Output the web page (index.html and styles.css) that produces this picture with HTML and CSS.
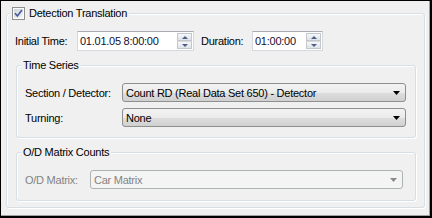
FILE: index.html
```html
<!DOCTYPE html>
<html lang="en">
<head>
    <meta charset="UTF-8">
    <title>Detection Translation</title>
    <link rel="stylesheet" href="styles.css">
</head>
<body>
    <div class="panel">
        <fieldset class="group group-main">
            <legend class="check-legend">
                <span class="checkbox">
                    <svg width="13" height="13" viewBox="0 0 13 13">
                        <defs>
                            <linearGradient id="cbFill" x1="0" y1="0" x2="1" y2="1">
                                <stop offset="0" stop-color="#cfd5dd"/>
                                <stop offset="1" stop-color="#f4f6f8"/>
                            </linearGradient>
                        </defs>
                        <rect x="0.5" y="0.5" width="12" height="12" fill="#fdfdfd" stroke="#8e8f8f"/>
                        <rect x="2" y="2" width="9" height="9" fill="url(#cbFill)"/>
                        <path d="M3 6.2 L5.4 9 L10 3" fill="none" stroke="#4a5b9a" stroke-width="1.7"/>
                    </svg>
                </span>
                <span>Detection Translation</span>
            </legend>

            <div class="time-row">
                <span class="lbl lbl-initial">Initial Time:</span>
                <div class="spin spin-initial">
                    <span class="spin-value">01.01.05 8:00:00</span>
                    <span class="spin-btns">
                        <span class="spin-btn"><span class="arrow-up"></span></span>
                        <span class="spin-btn"><span class="arrow-down"></span></span>
                    </span>
                </div>
                <span class="lbl lbl-duration">Duration:</span>
                <div class="spin spin-duration">
                    <span class="spin-value">01:00:00</span>
                    <span class="spin-btns">
                        <span class="spin-btn"><span class="arrow-up"></span></span>
                        <span class="spin-btn"><span class="arrow-down"></span></span>
                    </span>
                </div>
            </div>

            <!-- Time Series -->
            <fieldset class="group group-sub">
                <legend>Time Series</legend>
                <div class="field-row first">
                    <span class="lbl lbl-series">Section / Detector:</span>
                    <div class="combo">
                        <span class="combo-text">Count RD (Real Data Set 650) - Detector</span>
                        <svg class="combo-arrow" width="7" height="4" viewBox="0 0 7 4"><polygon points="0,0 7,0 3.5,4" fill="#000"/></svg>
                    </div>
                </div>
                <div class="field-row">
                    <span class="lbl lbl-series">Turning:</span>
                    <div class="combo">
                        <span class="combo-text">None</span>
                        <svg class="combo-arrow" width="7" height="4" viewBox="0 0 7 4"><polygon points="0,0 7,0 3.5,4" fill="#000"/></svg>
                    </div>
                </div>
            </fieldset>

            <!-- O/D Matrix Counts -->
            <fieldset class="group group-sub group-od">
                <legend>O/D Matrix Counts</legend>
                <div class="field-row first">
                    <span class="lbl lbl-od disabled">O/D Matrix:</span>
                    <div class="combo combo-disabled">
                        <span class="combo-text">Car Matrix</span>
                        <svg class="combo-arrow" width="7" height="4" viewBox="0 0 7 4"><polygon points="0,0 7,0 3.5,4" fill="#8a8a8a"/></svg>
                    </div>
                </div>
            </fieldset>
        </fieldset>
    </div>
</body>
</html>
```

FILE: styles.css
```css
/* Base */
* {
    box-sizing: border-box;
}

body {
    margin: 0;
    background-color: #f0f0f0;
    font-family: "Liberation Sans", Arial, sans-serif;
    font-size: 11px;
    letter-spacing: -0.25px;
    color: #000;
}

.panel {
    width: 432px;
    height: 218px;
    border: 1px solid #000;
    border-right-width: 2px;
    border-bottom-width: 2px;
    box-shadow: inset -1px -1px 0 #a0a0a0;
    overflow: hidden;
}

/* Group boxes */
.group {
    margin: 0;
    min-width: 0;
    border: 1px solid #d5dfe5;
    border-radius: 3px;
    box-shadow: inset 1px 1px 0 #fff, 1px 1px 0 #fff;
}

.group legend {
    background-color: #f0f0f0;
    padding: 0 2px;
}

.group-main {
    margin: 5px 5px 0;
    padding: 0 8px 6px;
}

.check-legend {
    display: flex;
    align-items: center;
    gap: 4px;
    margin-left: -5px;
    line-height: 15px;
}

.checkbox {
    display: flex;
    width: 13px;
    height: 13px;
}

.group-sub {
    margin: 8px 0 0 1px;
    padding: 0 8px 10px;
}

.group-sub legend {
    margin-left: -4px;
    line-height: 13px;
}

.group-od {
    padding-bottom: 11px;
}

/* Time row */
.time-row {
    display: flex;
    align-items: center;
    height: 20px;
    margin-top: 10px;
}

.lbl {
    flex: none;
    white-space: nowrap;
}

.lbl-initial {
    width: 62px;
}

.lbl-duration {
    width: 51px;
    margin-left: 7px;
}

.lbl-series {
    width: 97px;
}

.lbl-od {
    width: 65px;
}

.disabled {
    color: #838383;
}

/* Spin boxes */
.spin {
    display: flex;
    align-items: center;
    height: 20px;
    background-color: #fff;
    border: 1px solid #d5d9df;
    border-top-color: #abadb3;
}

.spin-initial {
    width: 117px;
}

.spin-duration {
    width: 71px;
}

.spin-value {
    flex: 1;
    padding-left: 2px;
    color: #101030;
    white-space: nowrap;
}

.spin-btns {
    display: flex;
    flex-direction: column;
    width: 15px;
    height: 16px;
    margin-right: 1px;
}

.spin-btn {
    flex: 1;
    display: flex;
    align-items: center;
    justify-content: center;
    border: 1px solid #c3c6cc;
    background: linear-gradient(#f6f7f9, #dfe3e8);
}

.spin-btn + .spin-btn {
    border-top-color: #d6d9de;
}

.arrow-up,
.arrow-down {
    width: 0;
    height: 0;
    border-left: 3px solid transparent;
    border-right: 3px solid transparent;
}

.arrow-up {
    border-bottom: 3px solid #4d5e8c;
}

.arrow-down {
    border-top: 3px solid #4d5e8c;
}

/* Combo boxes */
.field-row {
    display: flex;
    align-items: center;
    height: 19px;
    margin-top: 6px;
}

.field-row.first {
    margin-top: 11px;
}

.combo {
    flex: 1;
    display: flex;
    align-items: center;
    height: 19px;
    margin-right: 1px;
    padding-left: 3px;
    border: 1px solid #8e8f8f;
    border-radius: 3px;
    background: linear-gradient(#f3f3f3 0%, #ebebeb 50%, #dedede 51%, #d0d0d0 100%);
}

.combo-text {
    flex: 1;
    white-space: nowrap;
}

.combo-arrow {
    flex: none;
    margin: 1px 5px 0 0;
}

.combo-disabled {
    margin-right: 4px;
    border-color: #adb2b5;
    background: #f4f4f4;
    color: #838383;
}
```
